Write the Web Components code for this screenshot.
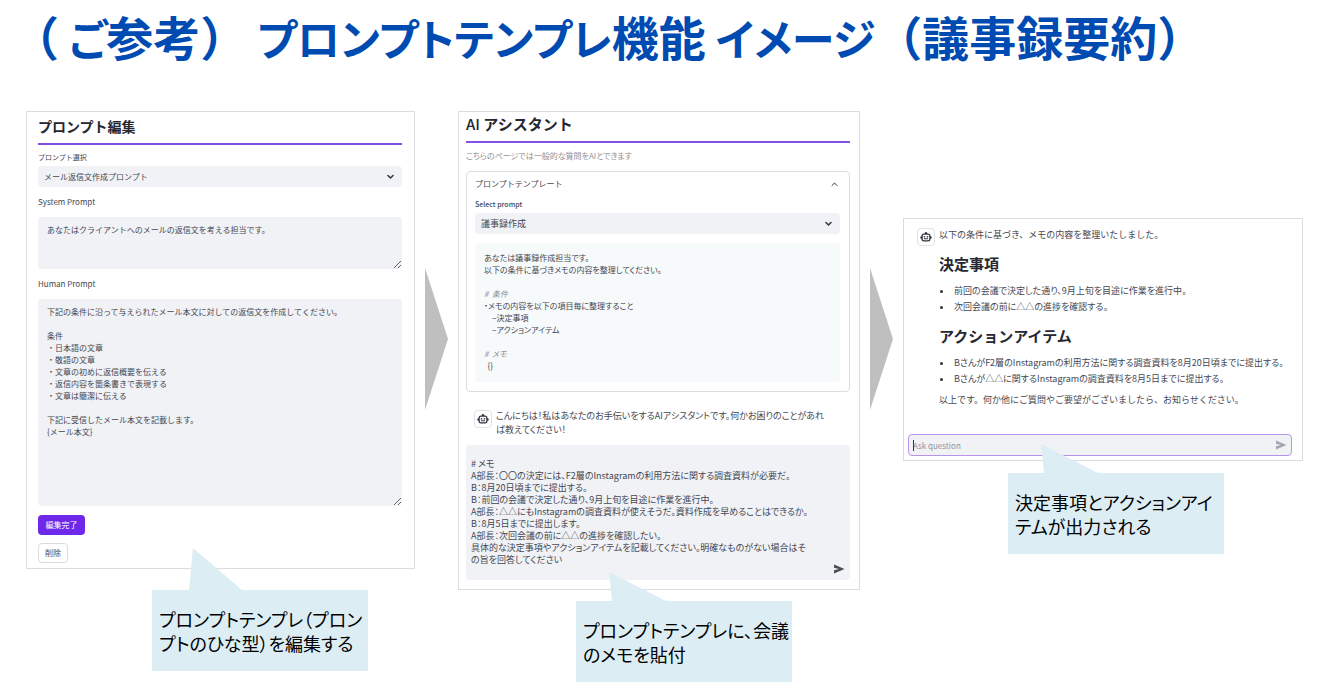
<!DOCTYPE html>
<html lang="ja">
<head>
<meta charset="utf-8">
<meta name="viewport" content="width=device-width, initial-scale=1">
<title>プロンプトテンプレ機能イメージ</title>
<style>
  body {
    margin: 0;
    background: #fff;
    color: #454752;
    font-family: "Noto Sans CJK JP", "Noto Sans", sans-serif;
    font-size: 8px;
    line-height: 12px;
  }
</style>
</head>
<body>
<slide-page>
  <slide-title slot="title">（<kana-text>ご</kana-text>参考）<kana-text>プロンプトテンプレ</kana-text>機能<kana-text>イメージ</kana-text>（議事録要約）</slide-title>

  <flow-step class="first">
    <prompt-editor></prompt-editor>
    <call-out slot="note" tail="long">プロンプトテンプレ（プロン<br>プトのひな型）を編集する</call-out>
  </flow-step>
  <flow-arrow></flow-arrow>
  <flow-step class="second">
    <assistant-chat></assistant-chat>
    <call-out slot="note">プロンプトテンプレに、会議<br>のメモを貼付</call-out>
  </flow-step>
  <flow-arrow></flow-arrow>
  <flow-step class="third">
    <answer-view></answer-view>
    <call-out slot="note">決定事項とアクションアイ<br>テムが出力される</call-out>
  </flow-step>
</slide-page>

<script>
function define(name, html, setup) {
  const template = document.createElement('template');
  template.innerHTML = html;
  customElements.define(name, class extends HTMLElement {
    constructor() {
      super();
      this.attachShadow({ mode: 'open' }).append(template.content.cloneNode(true));
    }
    connectedCallback() {
      if (setup) setup(this, this.shadowRoot);
    }
  });
}

define('slide-page', `
<style>
  :host { display: block; }
  main {
    display: grid;
    grid-template-columns: 389fr 23px 402fr 23px 400fr;
    gap: 10px;
    align-items: start;
    padding: 38px 16px 16px 26px;
  }
  ::slotted(flow-arrow) { margin-top: 157px; }
  ::slotted(.first) { --note-gap: 21px; --note-indent: 126px; }
  ::slotted(.second) { --note-gap: 11px; --note-indent: 118px; }
  ::slotted(.third) { --note-gap: 12px; --note-indent: 105px; margin-top: 107px; }
</style>
<header><slot name="title"></slot></header>
<main><slot></slot></main>`);

define('slide-title', `
<style>
  :host { display: block; padding-left: 12px; }
  h1 { margin: 0; font-size: 47px; line-height: 72px; font-weight: 700; color: #004bb1; white-space: nowrap; }
</style>
<h1><slot></slot></h1>`);

define('kana-text', `
<style>:host { display: inline; font-size: 43px; font-feature-settings: "palt"; }</style><slot></slot>`);

define('flow-step', `
<style>
  :host { display: block; min-width: 0; }
  .note { margin: var(--note-gap) 0 0 var(--note-indent); }
</style>
<slot></slot>
<div class="note"><slot name="note"></slot></div>`);

define('flow-arrow', `
<style>:host { display: block; } svg { display: block; width: 23px; height: 142px; }</style>
<svg viewBox="0 0 23 142" aria-hidden="true"><path d="M0 0 23 71 0 142Z" fill="#bfbfbf"/></svg>`);

define('call-out', `
<style>
  :host { display: flex; position: relative; align-items: center; box-sizing: border-box;
    width: 216px; height: 81px; padding-left: 7px; background: #dcedf4; color: #000; }
  p { margin: 0; font-size: 18px; line-height: 24px; white-space: nowrap; font-feature-settings: "palt"; }
  svg { position: absolute; left: 0; bottom: 100%; width: 100px; height: 42px; }
  .long { display: none; }
  :host([tail="long"]) .long { display: inline; }
  :host([tail="long"]) .short { display: none; }
</style>
<svg viewBox="0 0 100 42" aria-hidden="true" fill="#dcedf4">
  <path class="long" d="M41 0 90 42H37Z"/><path class="short" d="M33 13 90 42H36Z"/>
</svg>
<p><slot></slot></p>`);

define('app-card', `
<style>
  :host { display: block; box-sizing: border-box; border: 1px solid #dcdcde; background: #fff; }
</style>
<slot></slot>`);

define('select-field', `
<style>
  :host { display: block; }
  label { display: block; margin-bottom: 3px; font-size: var(--label-size, 8px); line-height: 12px; font-weight: var(--label-weight, 400); }
  .box { position: relative; }
  select { display: block; width: 100%; height: 21px; margin: 0; padding: 0 20px 0 6px; border: 0; border-radius: 4px;
    appearance: none; background: #f0f2f6; color: inherit; font-family: inherit; font-size: var(--value-size, 8px); }
  svg { position: absolute; right: 8px; top: 8px; width: 7px; height: 6px; pointer-events: none; }
</style>
<label for="s"></label>
<div class="box">
  <select id="s"><option></option></select>
  <svg viewBox="0 0 7 6" fill="none" stroke="#31333f" stroke-width="1.5" stroke-linecap="round" stroke-linejoin="round" aria-hidden="true"><path d="M1 1.5 3.5 4 6 1.5"/></svg>
</div>`, (el, root) => {
  root.querySelector('label').textContent = el.getAttribute('label');
  root.querySelector('option').textContent = el.getAttribute('value');
});

define('text-field', `
<style>
  :host { display: block; }
  label { display: block; margin-bottom: 9px; font-size: 8px; line-height: 12px; }
  textarea { display: block; box-sizing: border-box; width: 100%; height: var(--field-height); margin: 0; padding: 7px 9px;
    border: 0; border-radius: 4px; outline: 0; background: #f0f2f6; color: inherit; font-family: inherit; font-size: 8px; line-height: 12px; resize: vertical; }
</style>
<label for="t"></label>
<textarea id="t"></textarea>`, (el, root) => {
  root.querySelector('label').textContent = el.getAttribute('label');
  root.querySelector('textarea').value = el.textContent;
});

define('prompt-editor', `
<style>
  :host { display: block; }
  app-card { padding: 0 12px 5px 11px; }
  h2 { margin: 0 0 6px; padding-bottom: 3px; border-bottom: 2px solid #8350e8; font-size: 14px; line-height: 28px; font-weight: 700; color: #262730; }
  select-field { --label-size: 7px; }
  text-field { margin-top: 9px; }
  .system { --field-height: 52px; }
  .human { --field-height: 207px; }
  button { display: block; box-sizing: border-box; height: 20px; margin: 0; border-radius: 4px; font: inherit; font-size: 8px; line-height: 12px; }
  .save { width: 47px; margin-top: 9px; padding: 0; border: 0; background: #6d28ea; color: #fff; }
  .remove { width: 30px; margin-top: 8px; padding: 0; border: 1px solid #dadbe0; background: #fff; color: inherit; }
</style>
<app-card>
  <h2>プロンプト編集</h2>
  <select-field label="プロンプト選択" value="メール返信文作成プロンプト"></select-field>
  <text-field class="system" label="System Prompt">あなたはクライアントへのメールの返信文を考える担当です。</text-field>
  <text-field class="human" label="Human Prompt">下記の条件に沿って与えられたメール本文に対しての返信文を作成してください。

条件
・日本語の文章
・敬語の文章
・文章の初めに返信概要を伝える
・返信内容を箇条書きで表現する
・文章は簡潔に伝える

下記に受信したメール本文を記載します。
{メール本文}</text-field>
  <button class="save" type="button">編集完了</button>
  <button class="remove" type="button">削除</button>
</app-card>`);

define('bot-avatar', `
<style>
  :host { display: flex; flex: none; box-sizing: border-box; width: 18px; height: 18px; align-items: center; justify-content: center;
    border: 1px solid #dfe1e6; border-radius: 4px; background: #fff; }
  svg { display: block; width: 12px; height: 12px; }
</style>
<svg viewBox="0 0 24 24" fill="#31333f" aria-hidden="true">
  <path fill-rule="evenodd" d="M12 2a2.500 2.500 0 0 1 2.500 3H16a5 5 0 0 1 5 5v.5a2.500 2.500 0 0 1 0 5V16a5 5 0 0 1-5 5H8a5 5 0 0 1-5-5v-.5a2.500 2.500 0 0 1 0-5V10a5 5 0 0 1 5-5h1.500A2.500 2.500 0 0 1 12 2zM8 7.500A2.500 2.500 0 0 0 5.500 10v6A2.500 2.500 0 0 0 8 18.500h8a2.500 2.500 0 0 0 2.500-2.500v-6A2.500 2.500 0 0 0 16 7.500z"/>
  <circle cx="9" cy="11.5" r="1.7"/><circle cx="15" cy="11.5" r="1.7"/><path d="M8 14.500h8v2H8z"/>
</svg>`);

define('send-button', `
<style>
  :host { display: block; }
  button { display: block; width: 12px; height: 12px; margin: 0; padding: 0; border: 0; background: none; color: inherit; }
  svg { display: block; width: 12px; height: 12px; }
</style>
<button type="button" aria-label="送信"><svg viewBox="0 0 12 12" fill="currentColor" aria-hidden="true"><path d="M1 1.5 11.5 6 1 10.5V7.2L6 6 1 4.8Z"/></svg></button>`);

define('assistant-chat', `
<style>
  :host { display: block; }
  app-card { padding: 0 9px 9px 7px; }
  h2 { margin: 0 0 7px; padding-bottom: 5px; border-bottom: 2px solid #8350e8; font-size: 15px; line-height: 24px; font-weight: 700; color: #262730; }
  h2 span { font-weight: 500; }
  .caption { margin: 0 0 9px; color: #8f9097; font-feature-settings: "palt"; }
  details { padding: 0 9px 9px 8px; border: 1px solid #dcdde1; border-radius: 4px; }
  summary { display: flex; align-items: center; justify-content: space-between; margin-bottom: 2px; padding-right: 2px; line-height: 24px; list-style: none; }
  summary svg { width: 7px; height: 6px; }
  select-field { --label-size: 7px; --label-weight: 500; --value-size: 9px; }
  pre { margin: 9px 0 0; padding: 9px 9px 10px; border-radius: 4px; background: #f6fafb; font: inherit; font-feature-settings: "palt"; }
  em { color: #8b8d98; font-style: italic; }
  .message { display: flex; gap: 4px; margin: 17px 4px 8px 8px; }
  .message p { margin: 0; font-size: 9px; line-height: 14px; font-feature-settings: "palt"; }
  bot-avatar { margin-top: 1px; }
  .input { position: relative; }
  textarea { display: block; box-sizing: border-box; width: 100%; height: 135px; margin: 0; padding: 13px 24px 0 5px; border: 0; border-radius: 4px; outline: 0;
    background: #f0f2f6; color: inherit; font-family: inherit; font-size: 9px; line-height: 12px; resize: none; font-feature-settings: "palt"; }
  send-button { position: absolute; right: 5px; bottom: 5px; color: #4b4d59; }
</style>
<app-card>
  <h2><span>AI</span> アシスタント</h2>
  <p class="caption">こちらのページでは一般的な質問をAIとできます</p>
  <details open>
    <summary>プロンプトテンプレート<svg viewBox="0 0 7 6" fill="none" stroke="#31333f" stroke-linecap="round" stroke-linejoin="round" aria-hidden="true"><path d="M1 4.500 3.500 2 6 4.500"/></svg></summary>
    <select-field label="Select prompt" value="議事録作成"></select-field>
<pre>あなたは議事録作成担当です。
以下の条件に基づきメモの内容を整理してください。

<em>#  条件</em>
・メモの内容を以下の項目毎に整理すること
　−決定事項
　−アクションアイテム

<em>#  メモ</em>
  {}</pre>
  </details>
  <div class="message"><bot-avatar></bot-avatar><p>こんにちは！私はあなたのお手伝いをするAIアシスタントです。何かお困りのことがあれ<br>ば教えてください！</p></div>
  <div class="input">
    <textarea aria-label="Ask question"># メモ
A部長：〇〇の決定には、F2層のInstagramの利用方法に関する調査資料が必要だ。
B：8月20日頃までに提出する。
B：前回の会議で決定した通り、9月上旬を目途に作業を進行中。
A部長：△△にもInstagramの調査資料が使えそうだ。資料作成を早めることはできるか。
B：8月5日までに提出します。
A部長：次回会議の前に△△の進捗を確認したい。
具体的な決定事項やアクションアイテムを記載してください。明確なものがない場合はそ
の旨を回答してください</textarea>
    <send-button></send-button>
  </div>
</app-card>`);

define('answer-view', `
<style>
  :host { display: block; }
  app-card { padding: 8px 10px 4px 4px; }
  .message { display: flex; gap: 4px; margin: 0 0 26px 9px; font-size: 9px; line-height: 16px; }
  bot-avatar { margin-top: 1px; }
  p, ul { margin: 0; padding: 0; list-style: none; }
  ul { font-feature-settings: "palt"; }
  h2 { margin: 11px 0 9px; font-size: 15px; line-height: 20px; font-weight: 700; color: #262730; }
  li { display: flex; align-items: center; gap: 11px; }
  li::before { content: ""; width: 3px; height: 3px; margin-left: 1px; border-radius: 2px; background: #31333f; }
  ul + p { margin-top: 5px; }
  .input { position: relative; }
  input { display: block; box-sizing: border-box; width: 100%; height: 22px; margin: 0; padding: 0 24px 0 4px; border: 1px solid #b794ea; border-radius: 4px; outline: 0;
    background: #f0f2f6; color: inherit; font-family: inherit; font-size: 8px; }
  input::placeholder { color: #8f919d; opacity: 1; }
  .caret { position: absolute; left: 5px; top: 6px; width: 1px; height: 11px; background: #31333f; }
  send-button { position: absolute; right: 5px; top: 5px; color: #a3a5b0; }
</style>
<app-card>
  <div class="message"><bot-avatar></bot-avatar>
    <div>
      <p>以下の条件に基づき、メモの内容を整理いたしました。</p>
      <h2>決定事項</h2>
      <ul><li>前回の会議で決定した通り、9月上旬を目途に作業を進行中。</li><li>次回会議の前に△△の進捗を確認する。</li></ul>
      <h2>アクションアイテム</h2>
      <ul><li>BさんがF2層のInstagramの利用方法に関する調査資料を8月20日頃までに提出する。</li><li>Bさんが△△に関するInstagramの調査資料を8月5日までに提出する。</li></ul>
      <p>以上です。何か他にご質問やご要望がございましたら、お知らせください。</p>
    </div>
  </div>
  <div class="input"><input type="text" placeholder="Ask question" aria-label="Ask question"><span class="caret"></span><send-button></send-button></div>
</app-card>`);
</script>
</body>
</html>
